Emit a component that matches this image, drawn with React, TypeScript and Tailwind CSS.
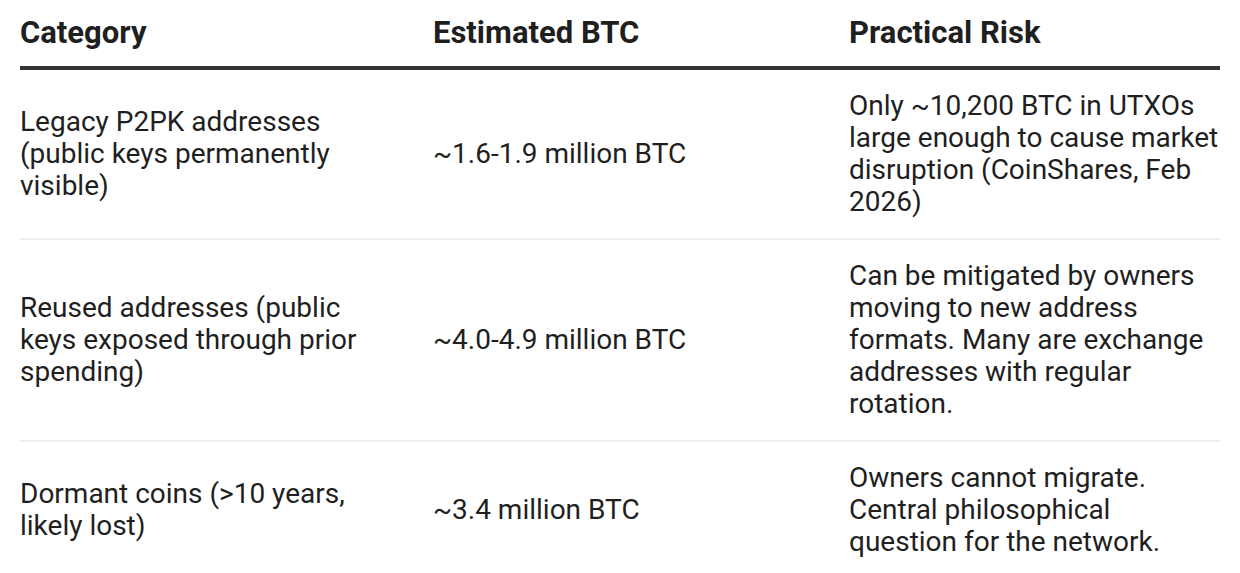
const rows = [
  {
    category: "Legacy P2PK addresses (public keys permanently visible)",
    btc: "~1.6-1.9 million BTC",
    risk: "Only ~10,200 BTC in UTXOs large enough to cause market disruption (CoinShares, Feb 2026)",
  },
  {
    category: "Reused addresses (public keys exposed through prior spending)",
    btc: "~4.0-4.9 million BTC",
    risk: "Can be mitigated by owners moving to new address formats. Many are exchange addresses with regular rotation.",
  },
  {
    category: "Dormant coins (>10 years, likely lost)",
    btc: "~3.4 million BTC",
    risk: "Owners cannot migrate. Central philosophical question for the network.",
  },
];

export default function App() {
  return (
    <div className="min-h-screen bg-white px-5 font-['Roboto','Liberation_Sans',sans-serif] text-[#1f1f1f]">
      <div className="grid grid-cols-[413px_416px_371px] border-b-4 border-[#333] text-[31px] font-bold leading-9">
        <div className="py-[15px] pr-5">Category</div>
        <div className="py-[15px] pr-5">Estimated BTC</div>
        <div className="py-[15px]">Practical Risk</div>
      </div>
      {rows.map((row) => (
        <div
          key={row.btc}
          className="grid grid-cols-[413px_416px_371px] items-center border-b-2 border-[#eeeeee] text-[28px] leading-8"
        >
          <div className="py-5 pr-[50px]">{row.category}</div>
          <div className="py-5 pr-5">{row.btc}</div>
          <div className="py-5">{row.risk}</div>
        </div>
      ))}
    </div>
  );
}
